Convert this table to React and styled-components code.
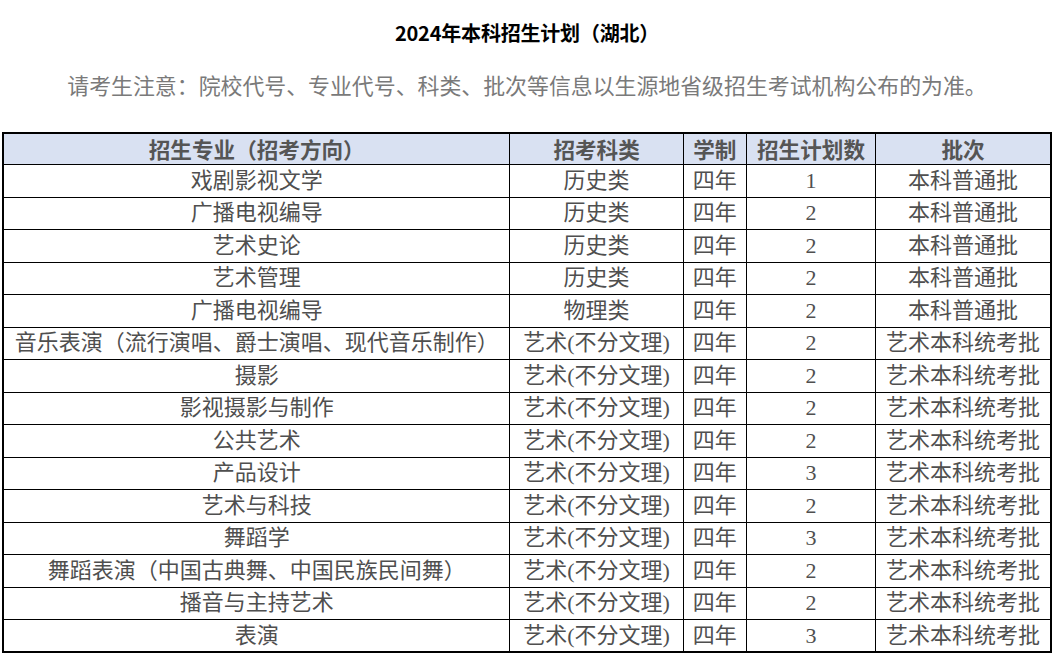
import React from 'react';
import styled, { createGlobalStyle } from 'styled-components';

const GlobalStyle = createGlobalStyle`
  html, body {
    margin: 0;
    padding: 0;
    background: #ffffff;
  }
  body {
    font-family: "Noto Sans CJK SC", "Noto Sans", sans-serif;
  }
`;

const Page = styled.div`
  width: 1054px;
  height: 656px;
  overflow: hidden;
  display: flex;
  flex-direction: column;
  align-items: center;
`;

const Title = styled.h1`
  margin: 21px 0 0;
  font-size: 20px;
  line-height: 24px;
  font-weight: 700;
  color: #000;
  letter-spacing: -0.2px;
`;

const Notice = styled.p`
  margin: 25px 0 0;
  font-size: 21.9px;
  line-height: 30px;
  color: #7a7a7a;
`;

const Table = styled.table`
  margin-top: 32px;
  width: 1050px;
  border-collapse: collapse;
  border: 2px solid #000;
  table-layout: fixed;
  font-family: "Liberation Serif", "Noto Sans CJK SC", serif;
`;

const HeadCell = styled.th`
  height: 30px;
  padding: 0;
  background: #d9e1f2;
  border: 1px solid #000;
  color: #555;
  font-family: "Noto Sans CJK SC", sans-serif;
  font-size: 21.6px;
  font-weight: 700;
  line-height: 1;
  text-align: center;
  white-space: nowrap;
`;

const Row = styled.tr`
  height: 32.5px;
`;

const Cell = styled.td`
  padding: 0;
  border: 1px solid #000;
  color: #4f4f4f;
  font-size: 22px;
  line-height: 1;
  text-align: center;
  white-space: nowrap;
  overflow: hidden;
`;

const columns = [
  { title: '招生专业（招考方向）', width: 506 },
  { title: '招考科类', width: 173 },
  { title: '学制', width: 63 },
  { title: '招生计划数', width: 129 },
  { title: '批次', width: 175 },
];

const ART = '艺术(不分文理)';
const ART_BATCH = '艺术本科统考批';
const NORMAL = '本科普通批';

const rows = [
  ['戏剧影视文学', '历史类', '四年', '1', NORMAL],
  ['广播电视编导', '历史类', '四年', '2', NORMAL],
  ['艺术史论', '历史类', '四年', '2', NORMAL],
  ['艺术管理', '历史类', '四年', '2', NORMAL],
  ['广播电视编导', '物理类', '四年', '2', NORMAL],
  ['音乐表演（流行演唱、爵士演唱、现代音乐制作）', ART, '四年', '2', ART_BATCH],
  ['摄影', ART, '四年', '2', ART_BATCH],
  ['影视摄影与制作', ART, '四年', '2', ART_BATCH],
  ['公共艺术', ART, '四年', '2', ART_BATCH],
  ['产品设计', ART, '四年', '3', ART_BATCH],
  ['艺术与科技', ART, '四年', '2', ART_BATCH],
  ['舞蹈学', ART, '四年', '3', ART_BATCH],
  ['舞蹈表演（中国古典舞、中国民族民间舞）', ART, '四年', '2', ART_BATCH],
  ['播音与主持艺术', ART, '四年', '2', ART_BATCH],
  ['表演', ART, '四年', '3', ART_BATCH],
];

export default function App() {
  return (
    <>
      <GlobalStyle />
      <Page>
        <Title>2024年本科招生计划（湖北）</Title>
        <Notice>请考生注意：院校代号、专业代号、科类、批次等信息以生源地省级招生考试机构公布的为准。</Notice>
        <Table>
          <colgroup>
            {columns.map((c) => (
              <col key={c.title} style={{ width: c.width }} />
            ))}
          </colgroup>
          <thead>
            <tr>
              {columns.map((c) => (
                <HeadCell key={c.title}>{c.title}</HeadCell>
              ))}
            </tr>
          </thead>
          <tbody>
            {rows.map((r, i) => (
              <Row key={i}>
                {r.map((v, j) => (
                  <Cell key={j}>{v}</Cell>
                ))}
              </Row>
            ))}
          </tbody>
        </Table>
      </Page>
    </>
  );
}
